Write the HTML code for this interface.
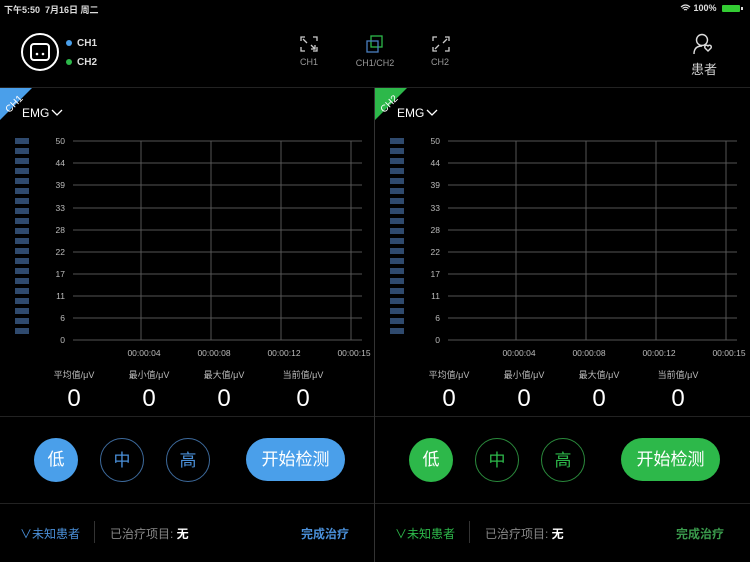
<!DOCTYPE html><html><head><meta charset="utf-8"><style>
*{margin:0;padding:0;box-sizing:border-box}
body{width:750px;height:562px;background:#000;color:#fff;font-family:"Liberation Sans","Noto Sans CJK SC",sans-serif;position:relative;overflow:hidden}
.a{position:absolute}
.s{font-size:9px;color:#ddd;font-weight:bold}
.lbl{font-size:9px;color:#999;text-align:center}
.p{position:absolute;top:88px;width:375px;height:474px}
.num{font-size:24px;color:#fff;width:60px;text-align:center}
.stat{font-size:9px;color:#bbb;width:70px;text-align:center}
.c{position:absolute;width:44px;height:44px;border-radius:50%;font-size:17px;line-height:44px;text-align:center}
.btn{position:absolute;left:246px;top:350px;width:99px;height:43px;border-radius:22px;font-size:17px;line-height:43px;text-align:center;color:#fff}
</style></head><body>
<div class="a s" style="left:4px;top:3px">下午5:50&nbsp;&nbsp;7月16日 周二</div>
<div class="a s" style="left:680px;top:3px">
<svg width="11" height="8" viewBox="0 0 11 8" style="vertical-align:-1px"><path d="M1 3Q5.5-1 10 3M2.5 4.5Q5.5 2 8.5 4.5M4 6Q5.5 5 7 6" stroke="#ddd" fill="none" stroke-width="1.3"/></svg> 100%</div>
<div class="a" style="left:722px;top:5px;width:18px;height:7px;background:#3c3;border-radius:1px"></div>
<div class="a" style="left:741px;top:7px;width:2px;height:3px;background:#ddd"></div>
<!-- header -->
<svg class="a" style="left:20px;top:32px" width="40" height="40"><circle cx="20" cy="20" r="18" stroke="#fff" stroke-width="2" fill="none"/><rect x="11" y="12" width="18" height="16" rx="3" stroke="#fff" stroke-width="2" fill="none"/><circle cx="17" cy="22" r="1.3" fill="#fff"/><circle cx="23" cy="22" r="1.3" fill="#fff"/></svg>
<div class="a" style="left:66px;top:40px;width:6px;height:6px;border-radius:50%;background:#4a9fea"></div>
<div class="a s" style="left:77px;top:38px;font-size:10px">CH1</div>
<div class="a" style="left:66px;top:59px;width:6px;height:6px;border-radius:50%;background:#2db84a"></div>
<div class="a s" style="left:77px;top:57px;font-size:10px">CH2</div>
<svg class="a" style="left:300px;top:36px" width="18" height="16" fill="none" stroke="#ccc" stroke-width="1.3"><path d="M1 5V1h4M13 1h4v4M17 11v4h-4M5 15H1v-4M3 3l4 4M15 13l-4-4M11 13h4v-4"/></svg>
<div class="a lbl" style="left:290px;top:57px;width:38px">CH1</div>
<svg class="a" style="left:365px;top:34px" width="20" height="20" fill="none" stroke-width="1.3"><rect x="6" y="2" width="11" height="11" stroke="#2db84a"/><rect x="2" y="7" width="11" height="11" stroke="#4a7fc0"/></svg>
<div class="a lbl" style="left:350px;top:58px;width:50px">CH1/CH2</div>
<svg class="a" style="left:432px;top:36px" width="18" height="16" fill="none" stroke="#ccc" stroke-width="1.3"><path d="M1 5V1h4M13 1h4v4M17 11v4h-4M5 15H1v-4M15 3l-4 4M3 13l4-4"/></svg>
<div class="a lbl" style="left:421px;top:57px;width:38px">CH2</div>
<svg class="a" style="left:692px;top:33px" width="24" height="22" fill="none" stroke="#ddd" stroke-width="1.4"><circle cx="10" cy="7" r="5.5"/><path d="M2 21q0-8 8-8"/><path d="M16 18l-3-3a1.6 1.6 0 0 1 3-2a1.6 1.6 0 0 1 3 2z"/></svg>
<div class="a" style="left:691px;top:59px;font-size:13px;color:#ccc">患者</div>
<div class="a" style="left:0;top:87px;width:750px;height:1px;background:#222"></div>
<div class="a" style="left:374px;top:88px;width:1px;height:474px;background:#333"></div>

<!-- Panel 1 -->
<div class="p" style="left:0">
<svg class="a" style="left:0;top:0" width="32" height="32"><path d="M0 0H32L0 32z" fill="#4a9fea"/><text x="3" y="22" transform="rotate(-45 10 16)" font-size="10" fill="#fff" font-family="Liberation Sans">CH1</text></svg>
<div class="a" style="left:22px;top:18px;font-size:12px">EMG<svg width="12" height="8" style="margin-left:2px"><path d="M1 1l5 5 5-5" stroke="#fff" fill="none" stroke-width="1.3"/></svg></div>
<svg class="a" style="left:0;top:40px" width="375" height="240" font-family="Liberation Sans" font-size="8.5" fill="#bbb">
<g fill="#2f4a6e"><rect x="15" y="10" width="14" height="6"/><rect x="15" y="20" width="14" height="6"/><rect x="15" y="30" width="14" height="6"/><rect x="15" y="40" width="14" height="6"/><rect x="15" y="50" width="14" height="6"/><rect x="15" y="60" width="14" height="6"/><rect x="15" y="70" width="14" height="6"/><rect x="15" y="80" width="14" height="6"/><rect x="15" y="90" width="14" height="6"/><rect x="15" y="100" width="14" height="6"/><rect x="15" y="110" width="14" height="6"/><rect x="15" y="120" width="14" height="6"/><rect x="15" y="130" width="14" height="6"/><rect x="15" y="140" width="14" height="6"/><rect x="15" y="150" width="14" height="6"/><rect x="15" y="160" width="14" height="6"/><rect x="15" y="170" width="14" height="6"/><rect x="15" y="180" width="14" height="6"/><rect x="15" y="190" width="14" height="6"/><rect x="15" y="200" width="14" height="6"/></g>
<g stroke="#555" stroke-width="1"><path d="M73 13H362M73 35H362M73 57H362M73 80H362M73 102H362M73 124H362M73 146H362M73 168H362M73 190H362M73 212H362M141 13V212M211 13V212M281 13V212M351 13V212"/></g>
<g text-anchor="end"><text x="65" y="16">50</text><text x="65" y="38">44</text><text x="65" y="60">39</text><text x="65" y="83">33</text><text x="65" y="105">28</text><text x="65" y="127">22</text><text x="65" y="149">17</text><text x="65" y="171">11</text><text x="65" y="193">6</text><text x="65" y="215">0</text></g>
<g text-anchor="middle"><text x="144" y="228">00:00:04</text><text x="214" y="228">00:00:08</text><text x="284" y="228">00:00:12</text><text x="354" y="228">00:00:15</text></g>
</svg>
<div class="a stat" style="left:39px;top:280px">平均值/μV</div><div class="a stat" style="left:114px;top:280px">最小值/μV</div><div class="a stat" style="left:189px;top:280px">最大值/μV</div><div class="a stat" style="left:268px;top:280px">当前值/μV</div>
<div class="a num" style="left:44px;top:297px">0</div><div class="a num" style="left:119px;top:297px">0</div><div class="a num" style="left:194px;top:297px">0</div><div class="a num" style="left:273px;top:297px">0</div>
<div class="a" style="left:0;top:328px;width:374px;height:1px;background:#222"></div>
<div class="c" style="left:34px;top:350px;background:#4a9fea">低</div>
<div class="c" style="left:100px;top:350px;border:1.5px solid #3d6a9c;color:#4a8fd8">中</div>
<div class="c" style="left:166px;top:350px;border:1.5px solid #3d6a9c;color:#4a8fd8">高</div>
<div class="btn" style="background:#4a9fea">开始检测</div>
<div class="a" style="left:0;top:415px;width:374px;height:1px;background:#222"></div>
<div class="a" style="left:20px;top:437px;font-size:12px;color:#4a8fd8">∨未知患者</div>
<div class="a" style="left:94px;top:433px;width:1px;height:22px;background:#333"></div>
<div class="a" style="left:110px;top:437px;font-size:12px;color:#888">已治疗项目: <b style="color:#fff">无</b></div>
<div class="a" style="left:301px;top:437px;font-size:12px;color:#4a8fd8;font-weight:bold">完成治疗</div>
</div>

<!-- Panel 2 -->
<div class="p" style="left:375px">
<svg class="a" style="left:0;top:0" width="32" height="32"><path d="M0 0H32L0 32z" fill="#2db84a"/><text x="3" y="22" transform="rotate(-45 10 16)" font-size="10" fill="#fff" font-family="Liberation Sans">CH2</text></svg>
<div class="a" style="left:22px;top:18px;font-size:12px">EMG<svg width="12" height="8" style="margin-left:2px"><path d="M1 1l5 5 5-5" stroke="#fff" fill="none" stroke-width="1.3"/></svg></div>
<svg class="a" style="left:0;top:40px" width="375" height="240" font-family="Liberation Sans" font-size="8.5" fill="#bbb">
<g fill="#2f4a6e"><rect x="15" y="10" width="14" height="6"/><rect x="15" y="20" width="14" height="6"/><rect x="15" y="30" width="14" height="6"/><rect x="15" y="40" width="14" height="6"/><rect x="15" y="50" width="14" height="6"/><rect x="15" y="60" width="14" height="6"/><rect x="15" y="70" width="14" height="6"/><rect x="15" y="80" width="14" height="6"/><rect x="15" y="90" width="14" height="6"/><rect x="15" y="100" width="14" height="6"/><rect x="15" y="110" width="14" height="6"/><rect x="15" y="120" width="14" height="6"/><rect x="15" y="130" width="14" height="6"/><rect x="15" y="140" width="14" height="6"/><rect x="15" y="150" width="14" height="6"/><rect x="15" y="160" width="14" height="6"/><rect x="15" y="170" width="14" height="6"/><rect x="15" y="180" width="14" height="6"/><rect x="15" y="190" width="14" height="6"/><rect x="15" y="200" width="14" height="6"/></g>
<g stroke="#555" stroke-width="1"><path d="M73 13H362M73 35H362M73 57H362M73 80H362M73 102H362M73 124H362M73 146H362M73 168H362M73 190H362M73 212H362M141 13V212M211 13V212M281 13V212M351 13V212"/></g>
<g text-anchor="end"><text x="65" y="16">50</text><text x="65" y="38">44</text><text x="65" y="60">39</text><text x="65" y="83">33</text><text x="65" y="105">28</text><text x="65" y="127">22</text><text x="65" y="149">17</text><text x="65" y="171">11</text><text x="65" y="193">6</text><text x="65" y="215">0</text></g>
<g text-anchor="middle"><text x="144" y="228">00:00:04</text><text x="214" y="228">00:00:08</text><text x="284" y="228">00:00:12</text><text x="354" y="228">00:00:15</text></g>
</svg>
<div class="a stat" style="left:39px;top:280px">平均值/μV</div><div class="a stat" style="left:114px;top:280px">最小值/μV</div><div class="a stat" style="left:189px;top:280px">最大值/μV</div><div class="a stat" style="left:268px;top:280px">当前值/μV</div>
<div class="a num" style="left:44px;top:297px">0</div><div class="a num" style="left:119px;top:297px">0</div><div class="a num" style="left:194px;top:297px">0</div><div class="a num" style="left:273px;top:297px">0</div>
<div class="a" style="left:0;top:328px;width:375px;height:1px;background:#222"></div>
<div class="c" style="left:34px;top:350px;background:#2db84a">低</div>
<div class="c" style="left:100px;top:350px;border:1.5px solid #2a8a3c;color:#2db84a">中</div>
<div class="c" style="left:166px;top:350px;border:1.5px solid #2a8a3c;color:#2db84a">高</div>
<div class="btn" style="background:#2db84a">开始检测</div>
<div class="a" style="left:0;top:415px;width:375px;height:1px;background:#222"></div>
<div class="a" style="left:20px;top:437px;font-size:12px;color:#2db84a">∨未知患者</div>
<div class="a" style="left:94px;top:433px;width:1px;height:22px;background:#333"></div>
<div class="a" style="left:110px;top:437px;font-size:12px;color:#888">已治疗项目: <b style="color:#fff">无</b></div>
<div class="a" style="left:301px;top:437px;font-size:12px;color:#3a9a4c;font-weight:bold">完成治疗</div>
</div>
</body></html>
